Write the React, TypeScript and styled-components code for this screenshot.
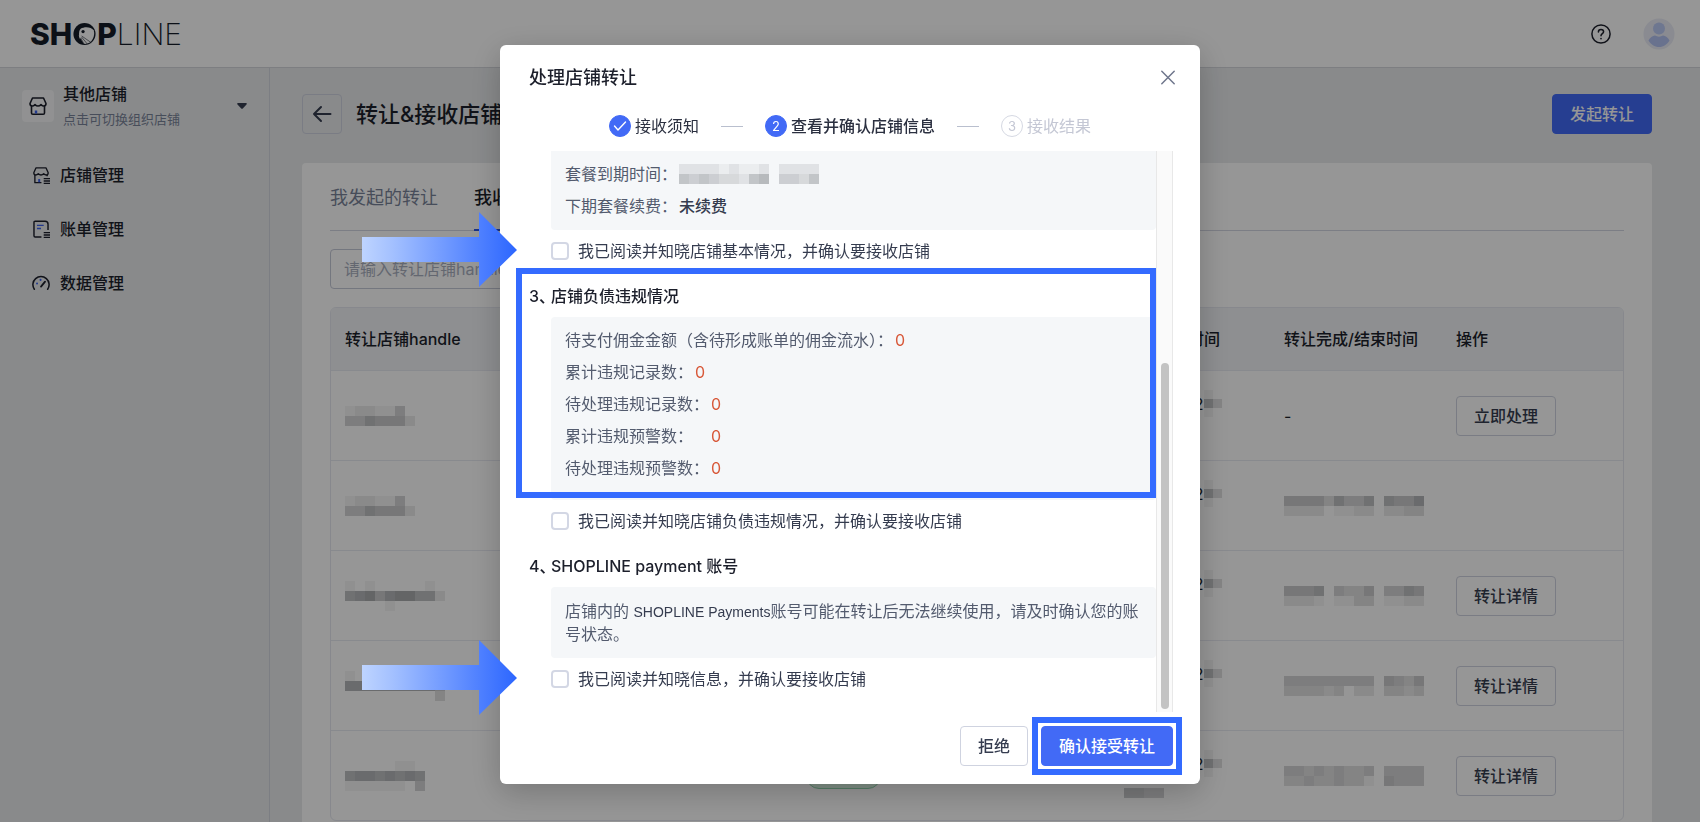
import React from "react";
import styled, { createGlobalStyle, css } from "styled-components";

const GlobalStyle = createGlobalStyle`
  *, *::before, *::after { box-sizing: border-box; }
  html, body { margin: 0; height: 100%; overflow: hidden; }
  body {
    font-family: Inter, "Noto Sans CJK SC", sans-serif;
    font-size: 16px;
    line-height: 24px;
    color: #1c1f2b;
    background: #e9ebed;
  }
  button, input { font: inherit; color: inherit; }
  button { padding: 0; border: 0; background: none; cursor: pointer; }
`;

/* ---------- page shell ---------- */

const Header = styled.header`
  display: flex;
  align-items: center;
  justify-content: space-between;
  height: 68px;
  padding: 0 25px 0 30px;
  background: #fff;
  border-bottom: 1px solid #d5d7dc;
`;

const Brand = styled.a`
  display: flex;
  align-items: center;
  font-size: 30px;
  line-height: 32px;
  color: #151c28;
  text-decoration: none;
`;

const BrandBold = styled.span`
  font-weight: 800;
`;

const BrandThin = styled.span`
  font-weight: 200;
`;

const HeaderTools = styled.div`
  display: flex;
  align-items: center;
  gap: 32px;
`;

const IconButton = styled.button`
  display: flex;
`;

const Shell = styled.div`
  display: flex;
  align-items: stretch;
`;

const Sidebar = styled.aside`
  flex: 0 0 270px;
  padding: 13px 22px;
  min-height: calc(100vh - 68px);
  border-right: 1px solid #d3d6df;
`;

const StoreSwitch = styled.button`
  display: flex;
  align-items: center;
  width: 100%;
  gap: 9px;
  text-align: left;
`;

const StoreBadge = styled.span`
  display: flex;
  align-items: center;
  justify-content: center;
  width: 32px;
  height: 32px;
  border-radius: 4px;
  background: #f6f7f8;
`;

const StoreText = styled.span`
  display: flex;
  flex: 1;
  flex-direction: column;
`;

const StoreName = styled.strong`
  font-weight: 500;
  line-height: 26px;
`;

const StoreHint = styled.span`
  font-size: 13px;
  color: #7a8499;
`;

const Nav = styled.nav`
  display: flex;
  flex-direction: column;
  gap: 30px;
  margin-top: 32px;
  padding-left: 10px;
`;

const NavLink = styled.a`
  display: flex;
  align-items: center;
  gap: 10px;
  font-weight: 500;
  color: inherit;
  text-decoration: none;
`;

const Main = styled.main`
  flex: 1;
  min-width: 0;
  padding: 26px 48px 0 32px;
`;

const TitleBar = styled.div`
  display: flex;
  align-items: center;
  gap: 14px;
`;

const BackButton = styled.button`
  display: flex;
  align-items: center;
  justify-content: center;
  width: 40px;
  height: 40px;
  border: 1px solid #cfd3e0;
  border-radius: 4px;
`;

const PageTitle = styled.h1`
  flex: 1;
  margin: 0;
  font-size: 22px;
  font-weight: 500;
`;

const Button = styled.button<{ $primary?: boolean }>`
  position: relative;
  height: 40px;
  padding: 0 17px;
  border: 1px solid #cfd3e0;
  border-radius: 4px;
  font-weight: 500;
  color: #353c4f;
  ${(p) =>
    p.$primary &&
    css`
      color: #fff;
      background: #426af6;
      border-color: #426af6;
    `}
`;

const Card = styled.section`
  margin-top: 29px;
  padding: 0 28px 28px;
  border-radius: 4px;
  background: #fff;
`;

const Tabs = styled.div`
  display: flex;
  gap: 36px;
  border-bottom: 1px solid #d3d6e2;
`;

const Tab = styled.button<{ $active?: boolean }>`
  height: 68px;
  margin-bottom: -1px;
  padding-top: 3px;
  border-bottom: 2px solid ${(p) => (p.$active ? "#2a55e5" : "transparent")};
  font-size: 18px;
  font-weight: ${(p) => (p.$active ? 500 : 400)};
  color: ${(p) => (p.$active ? "#1c1f2b" : "#7a8499")};
`;

const Search = styled.input`
  display: block;
  width: 400px;
  height: 40px;
  margin: 18px 0;
  padding: 0 13px;
  border: 1px solid #c6cad8;
  border-radius: 4px;
  background: transparent;
  &::placeholder {
    color: #a9afbf;
    opacity: 1;
  }
`;

const Table = styled.table`
  width: 100%;
  table-layout: fixed;
  border: 1px solid #e6e8f0;
  border-radius: 6px;
  border-spacing: 0;
  overflow: hidden;
`;

const Col = styled.col<{ $w?: number }>`
  width: ${(p) => (p.$w ? `${p.$w}px` : "auto")};
`;

const Th = styled.th`
  height: 62px;
  padding: 0 14px;
  text-align: left;
  font-weight: 500;
  white-space: nowrap;
  background: #f1f3f6;
`;

const Td = styled.td`
  height: 90px;
  padding: 0 14px;
  border-top: 1px solid #e8eaf2;
`;

const StatusPill = styled.span`
  display: block;
  width: 75px;
  height: 26px;
  border: 1px solid #8fd3ad;
  border-radius: 13px;
  background: #d7f3e2;
`;

const TimeLine = styled.div`
  display: flex;
  align-items: center;
  height: 24px;
  white-space: nowrap;
`;

/* ---------- dialog ---------- */

const Overlay = styled.div`
  position: fixed;
  inset: 0;
  display: flex;
  align-items: flex-start;
  justify-content: center;
  padding-top: 45px;
  background: rgba(0, 0, 0, 0.41);
`;

const Dialog = styled.div`
  width: 700px;
  max-width: 100%;
  border-radius: 6px;
  background: #fff;
  box-shadow: 0 8px 32px rgba(0, 0, 0, 0.22);
`;

const DialogHead = styled.div`
  display: flex;
  align-items: center;
  justify-content: space-between;
  padding: 21px 24px 0 29px;
`;

const DialogTitle = styled.h2`
  margin: 0;
  font-size: 18px;
  font-weight: 500;
`;

const Steps = styled.ol`
  display: flex;
  align-items: center;
  justify-content: center;
  gap: 22px;
  margin: 0;
  padding: 24px 0 13px;
  list-style: none;
`;

const Step = styled.li<{ $state: "done" | "current" | "todo" }>`
  display: flex;
  align-items: center;
  gap: 4px;
  font-weight: ${(p) => (p.$state === "current" ? 500 : 400)};
  color: ${(p) => (p.$state === "todo" ? "#c4c7d4" : "#2b3040")};
`;

const StepDot = styled.span<{ $todo?: boolean }>`
  display: flex;
  align-items: center;
  justify-content: center;
  width: 22px;
  height: 22px;
  border: 1px solid ${(p) => (p.$todo ? "#d6d9e3" : "#426af6")};
  border-radius: 50%;
  font-size: 13px;
  font-weight: 400;
  color: ${(p) => (p.$todo ? "#c4c7d4" : "#fff")};
  background: ${(p) => (p.$todo ? "#fff" : "#426af6")};
`;

const StepDash = styled.li`
  width: 22px;
  height: 1px;
  background: #b9bfce;
`;

const DialogBody = styled.div`
  display: flex;
  padding: 0 27px 0 29px;
`;

const Content = styled.div`
  flex: 1;
  min-width: 0;
  padding-bottom: 21px;
`;

const ScrollTrack = styled.div`
  display: flex;
  align-items: flex-end;
  justify-content: center;
  width: 17px;
  padding-bottom: 3px;
  border: solid #e8e8e8;
  border-width: 0 1px;
  background: #fafafa;
`;

const ScrollThumb = styled.div`
  width: 8px;
  height: 62%;
  border-radius: 4px;
  background: #c3c3c3;
`;

const Section = styled.section`
  position: relative;
  padding-left: 22px;
  & + & {
    margin-top: 21px;
  }
`;

const SectionTitle = styled.h3`
  display: flex;
  margin: 0 0 9px -22px;
  font-size: 16px;
  font-weight: 500;
`;

const SectionNo = styled.span`
  flex: 0 0 22px;
  white-space: nowrap;
  font-feature-settings: "halt";
`;

const Panel = styled.div<{ $tall?: boolean; $open?: boolean }>`
  padding: 7px 14px ${(p) => (p.$tall ? 16 : 8)}px;
  border-radius: ${(p) => (p.$open ? "0 0 4px 4px" : "4px")};
  background: #f5f7f9;
`;

const Field = styled.div<{ $wide?: boolean }>`
  display: flex;
  align-items: center;
  gap: ${(p) => (p.$wide ? 18 : 2)}px;
  height: 32px;
  color: #535b6e;
`;

const FieldValue = styled.span`
  font-weight: 500;
  color: #353c4f;
`;

const Count = styled.span`
  color: #d8593a;
`;

const Notice = styled.p`
  margin: 0;
  padding: 13px 14px;
  border-radius: 4px;
  line-height: 22px;
  color: #535b6e;
  background: #f5f7f9;
`;

const Product = styled.span`
  font-family: "Liberation Sans", sans-serif;
  font-size: 14px;
  color: #353c4f;
`;

const Agree = styled.label`
  position: relative;
  display: flex;
  align-items: center;
  gap: 9px;
  height: 24px;
  margin-top: 9px;
  color: #353c4f;
`;

const Check = styled.input`
  appearance: none;
  width: 18px;
  height: 18px;
  margin: 0;
  border: 2px solid #d3d7e4;
  border-radius: 4px;
  background: #fff;
`;

const DialogFoot = styled.div`
  display: flex;
  justify-content: flex-end;
  gap: 13px;
  padding: 14px 27px 18px;
`;

/* ---------- annotations ---------- */

const SectionFrame = styled.span`
  position: absolute;
  inset: -16px 0 35px -13px;
  border: 6px solid #346bff;
  pointer-events: none;
`;

const ButtonFrame = styled.span`
  position: absolute;
  inset: -10px;
  border: 6px solid #346bff;
  pointer-events: none;
`;

const ArrowSvg = styled.svg`
  position: absolute;
  bottom: -24px;
  right: calc(100% + 34px);
`;

const Arrow = ({ id }: { id: string }) => (
  <ArrowSvg width="155" height="75" viewBox="0 0 155 75" aria-hidden="true">
    <defs>
      <linearGradient id={id} x1="0" x2="1" y1="0" y2="0">
        <stop offset="0" stopColor="#bed4ff" />
        <stop offset="0.2" stopColor="#a3c0ff" />
        <stop offset="0.75" stopColor="#5081ff" />
        <stop offset="1" stopColor="#2c66ff" />
      </linearGradient>
    </defs>
    <path d="M0 25H117V0L155 38L117 75V50H0Z" fill={`url(#${id})`} />
  </ArrowSvg>
);

const MosaicSvg = styled.svg`
  display: block;
`;

/* Masked value: each digit is one cell, a larger digit is a darker cell. */
const Mosaic = ({ rows, size = 10 }: { rows: string[]; size?: number }) => (
  <MosaicSvg
    width={rows[0].length * size}
    height={rows.length * size}
    shapeRendering="crispEdges"
    aria-hidden="true"
  >
    {rows.flatMap((row, y) =>
      row.split("").map((d, x) => (
        <rect
          key={`${x}-${y}`}
          x={x * size}
          y={y * size}
          width={size}
          height={size}
          fill="#14181f"
          fillOpacity={Number(d) * 0.045}
        />
      )),
    )}
  </MosaicSvg>
);

/* ---------- icons ---------- */

const BirdMark = () => (
  <svg width="25" height="24" viewBox="0 0 26 24" aria-hidden="true">
    <circle cx="13" cy="12" r="11.500" fill="#151c28" />
    <path
      d="M9 6.500C13 4 20 4.500 22.500 8C24 12 22.500 17 19 20.500C16 22.500 13 22.500 12 22L7.500 14.500C7 11 7.500 8 9 6.500Z"
      fill="#fff"
    />
    <path d="M10 14L20 21M9 14L16 22.500M8.500 15L12.500 22.500" stroke="#151c28" strokeWidth="0.600" />
    <path d="M7 13L10.500 14.500L8 17Z" fill="#fff" />
    <circle cx="11.500" cy="9.500" r="1.700" fill="#151c28" />
  </svg>
);

const shopRoof =
  "M4.500 2H15.500L18 7.500C18 9 17 10 15.700 10C14.500 10 13.800 9.400 13 8.600C12.200 9.400 11.200 10 10 10C8.800 10 7.800 9.400 7 8.600C6.200 9.400 5.500 10 4.300 10C3 10 2 9 2 7.500Z";

const ShopIcon = () => (
  <svg width="20" height="20" viewBox="0 0 20 20" fill="none" stroke="#1c1f2b" strokeWidth="1.600" strokeLinejoin="round" aria-hidden="true">
    <path d={shopRoof} />
    <path d="M3.500 10V17C3.500 17.800 4 18.300 4.800 18.300H15.200C16 18.300 16.500 17.800 16.500 17V10" />
    <path d="M8 14.500V17.500" stroke="#3a62f0" strokeWidth="2.400" />
  </svg>
);

const ShopListIcon = () => (
  <svg width="18" height="18" viewBox="0 0 20 20" fill="none" stroke="#1c1f2b" strokeWidth="1.500" strokeLinejoin="round" aria-hidden="true">
    <path d={shopRoof} />
    <path d="M3.200 10V18.500H10.500M16.800 10V11.500" />
    <path d="M8 14.500V18" stroke="#3a62f0" strokeWidth="2.200" />
    <path d="M13 14H20M13 16.700H20M13 19.300H20" strokeWidth="1.500" />
  </svg>
);

const BillIcon = () => (
  <svg width="18" height="18" viewBox="0 0 20 20" fill="none" stroke="#1c1f2b" strokeWidth="1.600" strokeLinejoin="round" aria-hidden="true">
    <path d="M10.500 18.800H3.500C2.700 18.800 2.200 18.300 2.200 17.500V2.700C2.200 1.900 2.700 1.400 3.500 1.400H14.500C16.500 1.400 17.800 2.800 17.800 4.600V11" />
    <path d="M5.500 6H13M5.500 9.500H10" stroke="#3a62f0" />
    <path d="M13 14H20M13 16.700H20M13 19.300H20" strokeWidth="1.500" />
  </svg>
);

const GaugeIcon = () => (
  <svg width="18" height="18" viewBox="0 0 20 20" fill="none" stroke="#1c1f2b" strokeWidth="1.700" strokeLinecap="round" aria-hidden="true">
    <path d="M2.600 17A9 9 0 1 1 17.400 17" />
    <path d="M10 14L14.500 8.500" strokeWidth="2" />
    <path d="M5.600 10.500V10.600M9.500 6.500V6.600" stroke="#3a62f0" strokeWidth="2.200" />
  </svg>
);

const HelpIcon = () => (
  <svg width="20" height="20" viewBox="0 0 20 20" fill="none" stroke="#1c1f2b" strokeWidth="1.500" strokeLinecap="round" aria-hidden="true">
    <circle cx="10" cy="10" r="9.100" />
    <path d="M7.400 7.900C7.400 6.400 8.500 5.400 10 5.400C11.500 5.400 12.600 6.400 12.600 7.700C12.600 9.500 10 9.700 10 11.700" />
    <path d="M10 14.500V14.600" strokeWidth="1.700" />
  </svg>
);

const AvatarIcon = () => (
  <svg width="32" height="32" viewBox="0 0 32 32" aria-hidden="true">
    <circle cx="16" cy="16" r="15.500" fill="#eaecf6" />
    <circle cx="16" cy="10.500" r="6" fill="#bccaf5" />
    <path d="M5.500 22.500C7 19.500 9.500 17.800 12 17.500C14.500 19 17.500 19 20 17.500C22.500 17.800 25 19.500 26.500 22.500C24 26.500 20.500 29 16 29C11.500 29 8 26.500 5.500 22.500Z" fill="#b3c2f2" />
  </svg>
);

const CaretIcon = () => (
  <svg width="10" height="6" viewBox="0 0 10 6" aria-hidden="true">
    <path d="M1 0H9C10 0 10 1 9.500 1.500L6 5.200C5.400 5.900 4.600 5.900 4 5.200L0.500 1.500C0 1 0 0 1 0Z" fill="#353c4f" />
  </svg>
);

const BackIcon = () => (
  <svg width="20" height="18" viewBox="0 0 20 18" fill="none" stroke="#353c4f" strokeWidth="2" strokeLinecap="round" strokeLinejoin="round" aria-hidden="true">
    <path d="M18.500 9H2M9 2L2 9L9 16" />
  </svg>
);

const CloseIcon = () => (
  <svg width="16" height="16" viewBox="0 0 16 16" fill="none" stroke="#6f768c" strokeWidth="1.500" strokeLinecap="round" aria-hidden="true">
    <path d="M1.800 1.300L14.200 13.700M14.200 1.300L1.800 13.700" />
  </svg>
);

const TickIcon = () => (
  <svg width="14" height="12" viewBox="0 0 14 12" fill="none" stroke="#fff" strokeWidth="1.400" strokeLinecap="round" strokeLinejoin="round" aria-hidden="true">
    <path d="M1.500 6L5 10L12.500 2" />
  </svg>
);

/* ---------- data ---------- */

const transfers: { handle: string[]; finished: string[] | null; action: string | null }[] = [
  { handle: ["1221140", "4465552"], finished: null, action: "立即处理" },
  { handle: ["1221140", "4465552"], finished: ["55553644606557", "22220112202233"], action: null },
  { handle: ["1010000010", "6785788662", "0000100000"], finished: ["55560433504465", "22210113301122"], action: "转让详情" },
  { handle: ["1000000000", "7777777775", "0000000003"], finished: ["44444444405435", "33332302203323"], action: "转让详情" },
  { handle: ["00000110", "67767676", "11111104"], finished: ["44343433404444", "33433433105444"], action: "转让详情" },
];

const debts = [
  { label: "待支付佣金金额（含待形成账单的佣金流水）：" },
  { label: "累计违规记录数：" },
  { label: "待处理违规记录数：" },
  { label: "累计违规预警数：", wide: true },
  { label: "待处理违规预警数：" },
];

export default function App() {
  return (
    <>
      <GlobalStyle />
      <Header>
        <Brand href="#" aria-label="SHOPLINE">
          <BrandBold>SH</BrandBold>
          <BirdMark />
          <BrandBold>P</BrandBold>
          <BrandThin>LINE</BrandThin>
        </Brand>
        <HeaderTools>
          <IconButton aria-label="帮助">
            <HelpIcon />
          </IconButton>
          <IconButton aria-label="账户">
            <AvatarIcon />
          </IconButton>
        </HeaderTools>
      </Header>

      <Shell>
        <Sidebar>
          <StoreSwitch>
            <StoreBadge>
              <ShopIcon />
            </StoreBadge>
            <StoreText>
              <StoreName>其他店铺</StoreName>
              <StoreHint>点击可切换组织店铺</StoreHint>
            </StoreText>
            <CaretIcon />
          </StoreSwitch>
          <Nav>
            <NavLink href="#stores">
              <ShopListIcon />
              店铺管理
            </NavLink>
            <NavLink href="#bills">
              <BillIcon />
              账单管理
            </NavLink>
            <NavLink href="#data">
              <GaugeIcon />
              数据管理
            </NavLink>
          </Nav>
        </Sidebar>

        <Main>
          <TitleBar>
            <BackButton aria-label="返回">
              <BackIcon />
            </BackButton>
            <PageTitle>转让&amp;接收店铺</PageTitle>
            <Button $primary>发起转让</Button>
          </TitleBar>

          <Card>
            <Tabs>
              <Tab>我发起的转让</Tab>
              <Tab $active>我收到的转让</Tab>
            </Tabs>
            <Search type="text" placeholder="请输入转让店铺handle" aria-label="转让店铺handle" />
            <Table>
              <colgroup>
                <Col />
                <Col $w={318} />
                <Col $w={160} />
                <Col $w={172} />
                <Col $w={181} />
              </colgroup>
              <thead>
                <tr>
                  <Th>转让店铺handle</Th>
                  <Th />
                  <Th>发起转让时间</Th>
                  <Th>转让完成/结束时间</Th>
                  <Th>操作</Th>
                </tr>
              </thead>
              <tbody>
                {transfers.map((t, i) => (
                  <tr key={i}>
                    <Td>
                      <Mosaic rows={t.handle} />
                    </Td>
                    <Td>
                      <StatusPill />
                    </Td>
                    <Td>
                      <TimeLine>
                        2022-12-2
                        <Mosaic rows={["10", "63", "10"]} size={9} />
                      </TimeLine>
                      <TimeLine>
                        <Mosaic rows={["0000", "5544"]} />
                      </TimeLine>
                    </Td>
                    <Td>{t.finished ? <Mosaic rows={t.finished} /> : "-"}</Td>
                    <Td>{t.action && <Button>{t.action}</Button>}</Td>
                  </tr>
                ))}
              </tbody>
            </Table>
          </Card>
        </Main>
      </Shell>

      <Overlay>
        <Dialog role="dialog" aria-modal="true" aria-labelledby="dialog-title">
          <DialogHead>
            <DialogTitle id="dialog-title">处理店铺转让</DialogTitle>
            <IconButton aria-label="关闭">
              <CloseIcon />
            </IconButton>
          </DialogHead>
          <Steps>
            <Step $state="done">
              <StepDot>
                <TickIcon />
              </StepDot>
              接收须知
            </Step>
            <StepDash aria-hidden="true" />
            <Step $state="current" aria-current="step">
              <StepDot>2</StepDot>
              查看并确认店铺信息
            </Step>
            <StepDash aria-hidden="true" />
            <Step $state="todo">
              <StepDot $todo>3</StepDot>
              接收结果
            </Step>
          </Steps>

          <DialogBody>
            <Content>
              <Section>
                <Panel $open>
                  <Field>
                    套餐到期时间：
                    <Mosaic rows={["22221211202222", "54543325604435"]} />
                  </Field>
                  <Field>
                    下期套餐续费：
                    <FieldValue>未续费</FieldValue>
                  </Field>
                </Panel>
                <Agree>
                  <Check type="checkbox" />
                  我已阅读并知晓店铺基本情况，并确认要接收店铺
                  <Arrow id="arrow-basic" />
                </Agree>
              </Section>

              <Section>
                <SectionTitle>
                  <SectionNo>3、</SectionNo>店铺负债违规情况
                </SectionTitle>
                <Panel $tall>
                  {debts.map((d) => (
                    <Field key={d.label} $wide={d.wide}>
                      {d.label}
                      <Count>0</Count>
                    </Field>
                  ))}
                </Panel>
                <Agree>
                  <Check type="checkbox" />
                  我已阅读并知晓店铺负债违规情况，并确认要接收店铺
                </Agree>
                <SectionFrame />
              </Section>

              <Section>
                <SectionTitle>
                  <SectionNo>4、</SectionNo>SHOPLINE payment 账号
                </SectionTitle>
                <Notice>
                  店铺内的 <Product>SHOPLINE Payments</Product>账号可能在转让后无法继续使用，请及时确认您的账号状态。
                </Notice>
                <Agree>
                  <Check type="checkbox" />
                  我已阅读并知晓信息，并确认要接收店铺
                  <Arrow id="arrow-payment" />
                </Agree>
              </Section>
            </Content>
            <ScrollTrack>
              <ScrollThumb />
            </ScrollTrack>
          </DialogBody>

          <DialogFoot>
            <Button>拒绝</Button>
            <Button $primary>
              确认接受转让
              <ButtonFrame />
            </Button>
          </DialogFoot>
        </Dialog>
      </Overlay>
    </>
  );
}
